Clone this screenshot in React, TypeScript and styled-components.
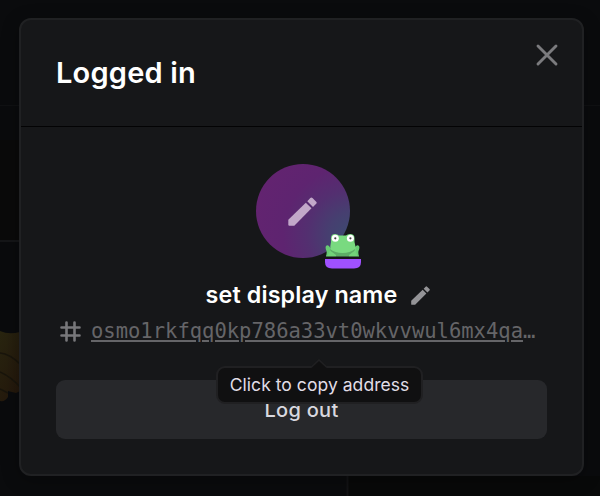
import React from "react";
import styled, { createGlobalStyle } from "styled-components";

const GlobalStyle = createGlobalStyle`
  *, *::before, *::after { box-sizing: border-box; }
  html, body { margin: 0; background: #0a0b0d; overflow: hidden; }
  body { font-family: Inter, "Liberation Sans", sans-serif; -webkit-font-smoothing: antialiased; }
  button { font: inherit; border: 0; padding: 0; background: none; color: inherit; }
`;

const Page = styled.div`
  position: relative;
  width: 600px;
  height: 496px;
  padding: 18px 16px 20px 19px;
  overflow: hidden;
  background: #0a0b0d;
`;

const Backdrop = styled.svg`
  position: absolute;
  inset: 0;
`;

const Dialog = styled.section`
  position: relative;
  display: flex;
  flex-direction: column;
  width: 565px;
  height: 458px;
  border: 2px solid #202123;
  border-radius: 12px;
  background: #161719;
  box-shadow: 0 4px 18px rgba(0, 0, 0, 0.3);
`;

const Header = styled.header`
  display: flex;
  justify-content: space-between;
  height: 107px;
  padding: 23px 23px 0 35px;
  border-bottom: 1px solid #030304;
`;

const Title = styled.h1`
  margin: 10px 0 0;
  color: #fff;
  font-size: 29px;
  line-height: 40px;
  font-weight: 600;
  letter-spacing: 0.2px;
`;

const CloseButton = styled.button`
  width: 24px;
  height: 24px;
  svg { display: block; }
`;

const Body = styled.div`
  display: flex;
  flex-direction: column;
  align-items: center;
  padding: 37px 35px 0;
`;

const Avatar = styled.div`
  position: relative;
  display: grid;
  place-items: center;
  width: 94px;
  height: 94px;
  margin-left: 2px;
  border-radius: 50%;
  background: radial-gradient(circle at 103% 76%, #3c4b70 0%, #463f70 20%, #532f70 38%, #5e2470 58%, #652370 100%);
`;

const FrogBadge = styled.svg`
  position: absolute;
  left: 67px;
  top: 67px;
`;

const NameRow = styled.div`
  display: flex;
  align-items: center;
  gap: 14px;
  height: 34px;
  margin: 20px 0 0 33px;
`;

const Name = styled.span`
  color: #fff;
  font-size: 23.3px;
  line-height: 34px;
  font-weight: 600;
  letter-spacing: 0.13px;
  white-space: nowrap;
`;

const AddressRow = styled.div`
  display: flex;
  align-items: center;
  gap: 10px;
  width: 100%;
  height: 30px;
  margin-top: 4px;
  padding-left: 4px;
  color: #77777a;
  svg { flex: none; }
`;

const Address = styled.span`
  font-family: "DejaVu Sans Mono", monospace;
  font-size: 20.5px;
  line-height: 30px;
  color: #656568;
  white-space: nowrap;
`;

const Underlined = styled.span`
  text-decoration: underline;
  text-decoration-thickness: 2px;
  text-underline-offset: 2px;
`;

const LogoutButton = styled.button`
  width: 491px;
  height: 59px;
  margin-top: 34px;
  padding-top: 1px;
  border-radius: 9px;
  background: #27282b;
  color: #d9d8df;
  font-size: 20px;
  font-weight: 500;
  letter-spacing: 0.3px;
`;

const Tooltip = styled.div`
  position: absolute;
  left: 195px;
  top: 346px;
  display: grid;
  place-items: center;
  width: 207px;
  height: 38px;
  padding-bottom: 1px;
  border: 2px solid #202022;
  border-radius: 9px;
  background: #101011;
  color: #e1dee7;
  font-size: 17.5px;
  letter-spacing: 0.05px;
  white-space: nowrap;
`;

const TooltipArrow = styled.svg`
  position: absolute;
  left: 93px;
  top: -9px;
`;

function Pencil({ size, color }: { size: number; color: string }) {
  return (
    <svg width={size} height={size} viewBox="0 0 29 29" fill={color}>
      <path d="M.3 22.700 17.800 5.700 23.500 11.300 6.300 28.700H1.300Q.3 28.700 .3 27.700Z" />
      <path d="M19.300 4.200 22.300 1Q23.400-.1 24.500 1L28.200 4.700Q29.200 5.700 28.200 6.800L25 9.900Z" />
    </svg>
  );
}

function Frog() {
  return (
    <FrogBadge width="40" height="39" viewBox="0 0 40 39">
      <path d="M3 25q1-3 .5-5-1.500-3-.5-5 1.400-1.400 3.200.2L10 21V26H3Zm33 0q-1-3-.5-5 1.500-3 .5-5-1.400-1.400-3.200.2L28 21V26H36Z" fill="#67cb73" />
      <path d="M7.300 20Q7 15 8 11V7Q8 3 12 3q2.500 0 4 1.500h7Q24.500 3 27 3q4.500 0 4.500 4v4q1.500 4.500 1 9l-2 5H10Z" fill="#79da80" />
      <path d="M7 18q5 4 12.500 4T32 18L31 26H8Z" fill="#5dad66" />
      <path d="M7 19.500 13 24V26H4Zm25 0-6 4.500v2h9Z" fill="#72d379" />
      <g fill="#fff"><circle cx="12.300" cy="7.300" r="3.500" /><circle cx="27.400" cy="7.300" r="3.500" /></g>
      <g fill="#444"><circle cx="12.300" cy="7.300" r="1.100" /><circle cx="27.400" cy="7.300" r="1.100" /></g>
      <path d="M0 26.500H40" stroke="#161719" strokeWidth="1.800" />
      <path d="M2 28H38V31Q38 37.500 31 37.500H9Q2 37.500 2 31Z" fill="#a051ff" />
    </FrogBadge>
  );
}

export default function App() {
  return (
    <>
      <GlobalStyle />
      <Page>
        <Backdrop width="600" height="496">
          <defs>
            <linearGradient id="hand" x2="0.6" y2="1">
              <stop stopColor="#292510" /><stop offset="1" stopColor="#24180c" />
            </linearGradient>
          </defs>
          <path d="M0 105.500H600" stroke="#101113" />
          <rect y="140" width="20" height="101" fill="#0a0a0a" />
          <path d="M0 241H20" stroke="#151618" strokeWidth="2" />
          <path d="M0 331Q9 335 20 332V391L16 393 8 391 8 397Q5 402 0 401Z" fill="url(#hand)" />
          <path d="M0 353Q10 354 20 364M0 372Q11 377 20 387M0 389 8 393" fill="none" stroke="#19150c" strokeWidth="1.500" />
          <rect x="348" y="476" width="252" height="20" fill="#080909" />
          <path d="M347.500 476V496" stroke="#121315" strokeWidth="2" />
        </Backdrop>
        <Dialog>
          <Header>
            <Title>Logged in</Title>
            <CloseButton aria-label="Close">
              <svg width="24" height="24" fill="none" stroke="#7b7b7e" strokeWidth="2.900" strokeLinecap="round">
                <path d="M3 3 21 21M21 3 3 21" />
              </svg>
            </CloseButton>
          </Header>
          <Body>
            <Avatar>
              <Pencil size={29} color="#c2a8c9" />
              <Frog />
            </Avatar>
            <NameRow>
              <Name>set display name</Name>
              <Pencil size={19} color="#949497" />
            </NameRow>
            <AddressRow>
              <svg width="21" height="21" fill="none" stroke="currentColor" strokeWidth="2.600" strokeLinecap="round">
                <path d="M6.500 1.500V19.500M14.500 1.500V19.500M1.500 6.500H19.500M1.500 14.500H19.500" />
              </svg>
              <Address><Underlined>osmo1rkfqq0kp786a33vt0wkvvwul6mx4qa</Underlined>…</Address>
            </AddressRow>
            <LogoutButton>Log out</LogoutButton>
          </Body>
          <Tooltip>
            <TooltipArrow width="16" height="10" viewBox="0 0 16 10">
              <path d="M0 10V8.500L8 1 16 8.500V10Z" fill="#101011" />
              <path d="M0 8.500 8 1 16 8.500" fill="none" stroke="#202022" strokeWidth="1.600" />
            </TooltipArrow>
            Click to copy address
          </Tooltip>
        </Dialog>
      </Page>
    </>
  );
}
